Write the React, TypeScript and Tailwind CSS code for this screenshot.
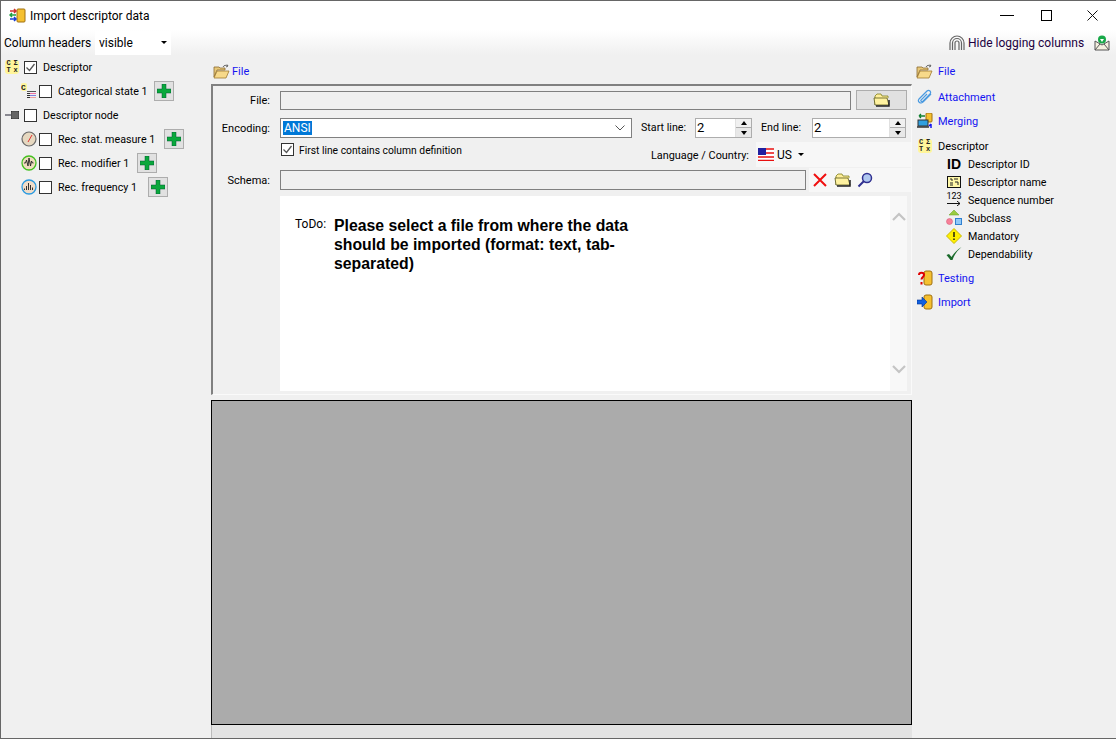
import type { ReactNode } from "react";

const uiFont = "font-['Roboto','Liberation_Sans',sans-serif]";

function Folder({ open = false }: { open?: boolean }) {
  if (open) {
    return (
      <svg width="17" height="15" viewBox="0 0 17 15" className="shrink-0">
        <path d="M1 3h5l1 1h5v2H4L1 13z" fill="#e8c878" stroke="#8a6a30" strokeWidth="0.8" />
        <path d="M1 14l3-7h12l-3 7z" fill="#f7d98a" stroke="#a07a30" strokeWidth="0.8" />
        <path d="M10 3c1-2 3-2 5-1l-1-1.500M15 2l-2 1" fill="none" stroke="#666" strokeWidth="1" />
      </svg>
    );
  }
  return (
    <svg width="17" height="14" viewBox="0 0 17 14" className="shrink-0">
      <path d="M2 12V3l2-2h4l1 2h6v2" fill="#ffef9a" stroke="#7f7f20" strokeWidth="0.8" />
      <path d="M1 5h13l2 7H2z" fill="#fff2a0" stroke="#55551a" strokeWidth="0.8" />
      <path d="M3 13h13V7" fill="none" stroke="#222" strokeWidth="1.500" />
    </svg>
  );
}

function DescriptorIcon() {
  return (
    <div className="w-[14px] h-[14px] shrink-0 bg-[#fff59a] rounded-[3px] grid grid-cols-2 text-[7px] leading-[7px] font-bold text-[#222] text-center font-['Liberation_Mono',monospace]">
      <span>C</span>
      <span>Σ</span>
      <span>T</span>
      <span>x</span>
    </div>
  );
}

function StateIcon() {
  return (
    <svg width="16" height="16" viewBox="0 0 16 16" className="shrink-0">
      <rect x="0" y="0" width="6" height="8" rx="2" fill="#fff59a" />
      <text x="0" y="7" fontSize="8" fontWeight="700" fontFamily="Liberation Mono" fill="#222">C</text>
      <rect x="6" y="8" width="9" height="1" fill="#555" />
      <rect x="6" y="10" width="3" height="1" fill="#333" />
      <rect x="9" y="10" width="6" height="1" fill="#f070a0" />
      <rect x="6" y="12" width="3" height="1" fill="#333" />
      <rect x="9" y="12" width="6" height="1" fill="#8080e0" />
      <rect x="6" y="14" width="3" height="1" fill="#333" />
      <rect x="9" y="14" width="6" height="1" fill="#f0a0a0" />
    </svg>
  );
}

function NodeIcon() {
  return (
    <svg width="14" height="10" viewBox="0 0 14 10" className="shrink-0">
      <rect x="0" y="4.500" width="6" height="1" fill="#223" />
      <rect x="6" y="1" width="8" height="8" fill="#333" />
      <path d="M6 3h8M6 5h8M6 7h8M8 1v8M10 1v8M12 1v8" stroke="#999" strokeWidth="0.600" />
    </svg>
  );
}

function GaugeIcon() {
  return (
    <svg width="16" height="16" viewBox="0 0 16 16" className="shrink-0">
      <circle cx="8" cy="8" r="7" fill="#e6d8c0" stroke="#6a6a6a" strokeWidth="1.200" />
      <path d="M7 11l4-7" stroke="#e03030" strokeWidth="1" />
    </svg>
  );
}

function WaveIcon() {
  return (
    <svg width="16" height="16" viewBox="0 0 16 16" className="shrink-0">
      <circle cx="8" cy="8" r="7" fill="#f0dcc0" stroke="#44c020" strokeWidth="1.300" />
      <path d="M3 8h1.500l1-3 1.500 6 1-8 1.500 8 1-5 1 2h1" fill="none" stroke="#222" strokeWidth="0.900" />
    </svg>
  );
}

function FreqIcon() {
  return (
    <svg width="16" height="16" viewBox="0 0 16 16" className="shrink-0">
      <circle cx="8" cy="8" r="7" fill="#f0dcc8" stroke="#2a9ae0" strokeWidth="1.300" />
      <path d="M3.500 11V9.500M5.500 11V7M7.500 11V4M9.500 11V6M11.500 11V8.500" stroke="#333" strokeWidth="1" />
    </svg>
  );
}

function Check({ checked = false }: { checked?: boolean }) {
  return (
    <div className="w-[13px] h-[13px] shrink-0 border border-[#333] bg-white flex items-center justify-center">
      {checked && (
        <svg width="11" height="11" viewBox="0 0 11 11">
          <path d="M1.500 5.500l3 3 5-6.500" fill="none" stroke="#555" strokeWidth="1.300" />
        </svg>
      )}
    </div>
  );
}

function AddButton() {
  return (
    <div className="w-5 h-5 shrink-0 bg-[#e1e1e1] border border-[#adadad] flex items-center justify-center">
      <svg width="14" height="14" viewBox="0 0 14 14">
        <path d="M5 0h4v5h5v4H9v5H5V9H0V5h5z" fill="#0aa83c" stroke="#053" strokeWidth="0.500" />
      </svg>
    </div>
  );
}

function TreeRow({ icon, label, sub = false, checked = false, add = false, labelWidth = "" }: { icon: ReactNode; label: string; sub?: boolean; checked?: boolean; add?: boolean; labelWidth?: string }) {
  return (
    <div className={`h-6 flex items-center ${sub ? "pl-[20px]" : "pl-[4px]"}`}>
      <div className={`flex justify-center items-center ${sub ? "w-4 mr-[2px]" : "w-[14px] mr-[5px]"}`}>{icon}</div>
      <Check checked={checked} />
      <span className={`ml-[6px] pt-[1px] text-[10.700px] whitespace-nowrap ${labelWidth}`}>{label}</span>
      {add && <div className="ml-2"><AddButton /></div>}
    </div>
  );
}

function SideLink({ icon, label, link = true, h = "h-6" }: { icon: ReactNode; label: string; link?: boolean; h?: string }) {
  return (
    <div className={`${h} flex items-center pl-[4px]`}>
      <div className="w-[17px] flex justify-center">{icon}</div>
      <span className={`ml-[5px] pt-[1px] ${link ? "text-[#1414f0]" : "text-black"}`}>{label}</span>
    </div>
  );
}

function SideChild({ icon, label }: { icon: ReactNode; label: string }) {
  return (
    <div className="h-[18px] flex items-center pl-[34px]">
      <div className="w-4 flex justify-center">{icon}</div>
      <span className="ml-[6px] pt-[1px] text-[10.700px]">{label}</span>
    </div>
  );
}

function Spinner({ width }: { width: string }) {
  return (
    <div className={`${width} h-5 border border-[#adadad] bg-white flex justify-between`}>
      <span className="pl-[1px] leading-[17px] text-[13px]">2</span>
      <div className="w-4 flex flex-col bg-[#f0f0f0] border-l border-[#e0e0e0]">
        <div className="h-[9px] flex items-center justify-center border-b border-[#adadad]">
          <div className="w-0 h-0 border-x-[3px] border-x-transparent border-b-[4px] border-b-black" />
        </div>
        <div className="flex-1 flex items-center justify-center bg-[#e8e8e8]">
          <div className="w-0 h-0 border-x-[3px] border-x-transparent border-t-[4px] border-t-black" />
        </div>
      </div>
    </div>
  );
}

function FormLabel({ children }: { children: ReactNode }) {
  return <div className="w-[57px] mr-[10px] pt-[1px] text-right whitespace-nowrap">{children}</div>;
}

export default function App() {
  return (
    <div className={`w-[1116px] h-[739px] overflow-hidden bg-[#f0f0f0] flex flex-col text-[11px] leading-4 text-black border-t border-l border-b border-[#666] ${uiFont}`}>
      {/* title bar */}
      <div className="h-[29px] shrink-0 bg-white flex items-center pl-2">
        <svg width="17" height="17" viewBox="0 0 17 17">
          <rect x="8" y="2" width="8" height="13" rx="1" fill="#f5c030" stroke="#a07010" />
          <path d="M1 4h6M5 2l2 2-2 2" fill="none" stroke="#d03030" strokeWidth="1.500" />
          <path d="M7 8H1M3 6L1 8l2 2" fill="none" stroke="#20a040" strokeWidth="1.500" />
          <path d="M1 12h6M5 10l2 2-2 2" fill="none" stroke="#1a40d0" strokeWidth="1.500" />
        </svg>
        <span className="ml-[4px] mt-[1px] text-[12px]">Import descriptor data</span>
        <div className="ml-auto flex items-center">
          <div className="w-[14px] h-[1px] bg-black" />
          <div className="w-[11px] h-[11px] border border-black ml-[27px]" />
          <svg width="11" height="11" viewBox="0 0 11 11" className="ml-[35px] mr-[18px]">
            <path d="M0.500 0.500l10 10M10.500 0.500l-10 10" stroke="#111" strokeWidth="1" />
          </svg>
        </div>
      </div>

      {/* toolbar */}
      <div className="h-[25px] shrink-0 bg-gradient-to-b from-white to-[#f0f0f0] flex items-center pl-[3px] text-[12px]">
        <span className="w-[87px] whitespace-nowrap">Column headers</span>
        <div className="ml-[4px] w-[76px] h-[24px] bg-white flex items-center justify-between pl-1 pr-[4px]">
          <span>visible</span>
          <div className="w-0 h-0 border-x-[3px] border-x-transparent border-t-[3px] border-t-black" />
        </div>
        <div className="ml-auto flex items-center">
          <svg width="16" height="16" viewBox="0 0 16 16">
            <path d="M1 15V8a7 7 0 0 1 14 0v7M3.500 15V8a4.500 4.500 0 0 1 9 0v7M6 15V8a2 2 0 0 1 4 0v7" fill="none" stroke="#666" strokeWidth="1.200" />
          </svg>
          <span className="ml-[3px] w-[118px] whitespace-nowrap text-[#200040]">Hide logging columns</span>
          <svg width="16" height="16" viewBox="0 0 16 16" className="ml-[8px] mr-[6px]">
            <path d="M1 6l7 4 7-4v9H1z" fill="#f5f0e0" stroke="#555" />
            <path d="M1 15l5-6M15 15l-5-6" stroke="#555" />
            <circle cx="8" cy="4.500" r="4" fill="#18a848" />
            <path d="M6 4h4L8 7z" fill="#fff" />
          </svg>
        </div>
      </div>

      <div className="flex-1 flex min-h-0">
        {/* left tree */}
        <div className="w-[210px] shrink-0">
          <TreeRow icon={<DescriptorIcon />} label="Descriptor" checked />
          <TreeRow icon={<StateIcon />} label="Categorical state 1" sub add labelWidth="w-[88px]" />
          <TreeRow icon={<NodeIcon />} label="Descriptor node" />
          <TreeRow icon={<GaugeIcon />} label="Rec. stat. measure 1" sub add labelWidth="w-[98px]" />
          <TreeRow icon={<WaveIcon />} label="Rec. modifier 1" sub add labelWidth="w-[71px]" />
          <TreeRow icon={<FreqIcon />} label="Rec. frequency 1" sub add labelWidth="w-[82px]" />
        </div>

        {/* centre */}
        <div className="w-[701px] shrink-0 flex flex-col">
          <div className="h-[29px] shrink-0 flex items-center pl-[2px] pt-[3px]">
            <Folder open />
            <span className="ml-[2px] pt-[1px] text-[#1414f0]">File</span>
          </div>

          <div className="h-[311px] shrink-0 border-t-2 border-l-2 border-r border-b border-t-[#808080] border-l-[#808080] border-r-[#fafafa] border-b-[#fafafa] flex flex-col pt-[4px] pr-[3px]">
            <div className="h-5 flex items-center">
              <FormLabel>File:</FormLabel>
              <div className="w-[571px] h-[19px] border border-[#808080] bg-[#f0f0f0]" />
              <div className="ml-[5px] w-[51px] h-[20px] bg-[#e1e1e1] border border-[#adadad] flex items-center justify-center">
                <Folder />
              </div>
            </div>

            <div className="mt-[8px] h-5 flex items-center">
              <FormLabel>Encoding:</FormLabel>
              <div className="w-[352px] h-5 border border-[#808080] bg-white flex items-center justify-between pl-[2px] pr-[6px]">
                <span className="bg-[#0078d7] text-white leading-[14px] text-[12px] px-[1px]">ANSI</span>
                <svg width="10" height="6" viewBox="0 0 10 6">
                  <path d="M0.500 0.500L5 5l4.500-4.500" fill="none" stroke="#555" />
                </svg>
              </div>
              <span className="ml-[9px] w-[54px] text-[10.700px] whitespace-nowrap">Start line:</span>
              <Spinner width="w-[57px]" />
              <span className="ml-[9px] w-[51px] text-[10.700px] whitespace-nowrap">End line:</span>
              <Spinner width="w-[94px]" />
            </div>

            <div className="h-[30px] flex">
              <div className="pl-[68px] pt-[5px] flex items-start">
                <Check checked />
                <span className="ml-[5px] pt-[1px] leading-[14px] text-[10.300px] whitespace-nowrap">First line contains column definition</span>
              </div>
              <div className="ml-auto -mr-[3px] flex items-start">
                <span className="mt-[10px] whitespace-nowrap text-[10.900px]">Language / Country:</span>
                <div className="ml-[7px] mt-[4px] w-[155px] h-[25px] bg-[#f7f7f7] flex items-center pl-[2px]">
                  <svg width="16" height="13" viewBox="0 0 16 13">
                    <rect width="16" height="13" fill="#fff" />
                    <path d="M0 1h16M0 5h16M0 9h16M0 12.500h16" stroke="#e81010" strokeWidth="1.500" />
                    <rect width="8" height="7" fill="#2020a0" />
                  </svg>
                  <span className="ml-[3px] text-[12px]">US</span>
                  <div className="ml-[6px] w-0 h-0 border-x-[3px] border-x-transparent border-t-[3px] border-t-black" />
                </div>
              </div>
            </div>

            <div className="h-6 flex items-center">
              <FormLabel>Schema:</FormLabel>
              <div className="w-[526px] h-5 border border-[#808080] bg-[#f0f0f0]" />
              <div className="ml-[3px] -mr-[3px] flex-1 h-6 bg-[#f7f7f7] flex items-center pl-[4px]">
                <svg width="14" height="14" viewBox="0 0 14 14">
                  <path d="M1 1l12 12M13 1L1 13" stroke="#f01010" strokeWidth="2" />
                </svg>
                <div className="ml-[7px]"><Folder /></div>
                <svg width="16" height="16" viewBox="0 0 16 16" className="ml-[6px]">
                  <circle cx="10" cy="6" r="4.500" fill="#b0c8f0" stroke="#303090" strokeWidth="1.500" />
                  <path d="M7 9l-5.500 5.500" stroke="#303090" strokeWidth="2" />
                </svg>
              </div>
            </div>

            <div className="mt-[4px] ml-[67px] w-[627px] h-[195px] bg-white flex">
              <div className="flex-1 flex pt-[20px] pl-[15px]">
                <span className="w-[39px] leading-[16px] text-[12px] whitespace-nowrap">ToDo:</span>
                <p className="w-[310px] font-['Liberation_Sans',sans-serif] font-bold text-[15.800px] leading-[19px]">
                  Please select a file from where the data should be imported (format: text, tab-separated)
                </p>
              </div>
              <div className="w-[17px] bg-[#f8f8f8] flex flex-col items-center justify-between pt-[16px] pb-[17px]">
                <svg width="14" height="9" viewBox="0 0 14 9">
                  <path d="M1 8l6-6 6 6" fill="none" stroke="#c4c4c4" strokeWidth="2.200" />
                </svg>
                <svg width="14" height="9" viewBox="0 0 14 9">
                  <path d="M1 1l6 6 6-6" fill="none" stroke="#c4c4c4" strokeWidth="2.200" />
                </svg>
              </div>
            </div>
          </div>

          <div className="mt-[5px] h-[325px] shrink-0 bg-[#ababab] border border-black" />
          <div className="flex-1 bg-[#e3e3e3] border-l border-[#bbb]" />
        </div>

        {/* right nav */}
        <div className="flex-1 min-w-0">
          <div className="h-[4px]" />
          <SideLink icon={<Folder open />} label="File" h="h-[24px]" />
          <div className="h-[1px]" />
          <SideLink
            h="h-[26px]"
            label="Attachment"
            icon={
              <svg width="16" height="16" viewBox="0 0 16 16">
                <path d="M14 5L6 13a2.500 2.500 0 0 1-4-3l8-8a2 2 0 0 1 3 3l-7 7a1 1 0 0 1-2-1l6-6" fill="none" stroke="#4a9ae0" strokeWidth="1.200" />
              </svg>
            }
          />
          <SideLink
            h="h-[22px]"
            label="Merging"
            icon={
              <svg width="16" height="16" viewBox="0 0 16 16">
                <rect x="9" y="0" width="6" height="9" rx="1" fill="#f5c030" stroke="#a07010" />
                <rect x="1" y="7" width="10" height="6" fill="#30a0e0" stroke="#333" />
                <path d="M0 14h12" stroke="#333" strokeWidth="1.500" />
                <path d="M2 3h6M2 3l2-2M2 3l2 2" stroke="#108030" strokeWidth="1.300" fill="none" />
                <path d="M14 15v-4m0 0l-2 2" stroke="#1414f0" strokeWidth="1.500" fill="none" />
              </svg>
            }
          />
          <div className="h-[5px]" />
          <SideLink h="h-[18px]" icon={<DescriptorIcon />} label="Descriptor" link={false} />
          <SideChild icon={<span className="font-['Liberation_Sans',sans-serif] font-bold text-[14px] leading-4">ID</span>} label="Descriptor ID" />
          <SideChild
            label="Descriptor name"
            icon={
              <svg width="14" height="12" viewBox="0 0 14 12">
                <rect x="0.500" y="0.500" width="13" height="11" fill="#fff8a8" stroke="#111" />
                <path d="M3 3h2v2M7 3h4M3 7h3M8 6h3v3M3 9h3" stroke="#222" strokeWidth="1" fill="none" />
              </svg>
            }
          />
          <SideChild
            label="Sequence number"
            icon={
              <div className="flex flex-col items-center leading-[9px] text-[9px] -mt-[2px]">
                <span>123</span>
                <svg width="14" height="5" viewBox="0 0 14 5">
                  <path d="M0 2.500h13M10 0l3 2.500-3 2.500" fill="none" stroke="#111" />
                </svg>
              </div>
            }
          />
          <SideChild
            label="Subclass"
            icon={
              <svg width="16" height="16" viewBox="0 0 16 16">
                <path d="M8 0l5 5H3z" fill="#9acc40" stroke="#60a020" strokeWidth="0.500" />
                <circle cx="3.500" cy="11.500" r="3" fill="#f88098" stroke="#d05070" strokeWidth="0.500" />
                <rect x="9.500" y="8.500" width="6" height="6" fill="#90c8f8" stroke="#3080d0" />
              </svg>
            }
          />
          <SideChild
            label="Mandatory"
            icon={
              <svg width="16" height="16" viewBox="0 0 16 16">
                <path d="M8 0.500L15.500 8 8 15.500 0.500 8z" fill="#fff000" stroke="#c8b800" />
                <path d="M8 4v5M8 10.500v1.500" stroke="#111" strokeWidth="1.400" />
              </svg>
            }
          />
          <SideChild
            label="Dependability"
            icon={
              <svg width="16" height="16" viewBox="0 0 16 16">
                <path d="M0.500 9l4 5 2 0C8 9 11 5 15.500 1 11 4 8 7 5.500 11L3 8z" fill="#1a6a2a" />
              </svg>
            }
          />
          <div className="h-[3px]" />
          <SideLink
            h="h-[24px]"
            label="Testing"
            icon={
              <svg width="16" height="16" viewBox="0 0 16 16">
                <rect x="7" y="1" width="8" height="14" rx="2" fill="#f5c030" stroke="#a07010" />
                <path d="M2 5c0-3 5-3 5 0 0 2-2.500 2-2.500 4.500M4.500 12v2.500" fill="none" stroke="#e00000" strokeWidth="2" />
              </svg>
            }
          />
          <SideLink
            h="h-[24px]"
            label="Import"
            icon={
              <svg width="16" height="16" viewBox="0 0 16 16">
                <rect x="7" y="1" width="8" height="14" rx="2" fill="#f5c030" stroke="#a07010" />
                <path d="M0 6h5V3l5 5-5 5v-3H0z" fill="#1060e0" stroke="#003090" strokeWidth="0.600" />
              </svg>
            }
          />
        </div>
      </div>
    </div>
  );
}
